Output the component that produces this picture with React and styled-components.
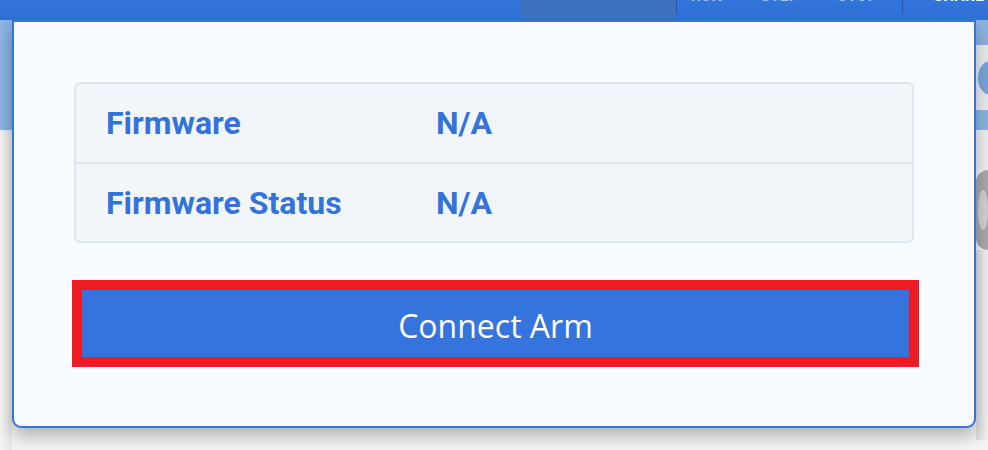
import React from 'react';
import styled, { createGlobalStyle } from 'styled-components';

const GlobalStyle = createGlobalStyle`
  html, body {
    margin: 0;
    padding: 0;
    background: #f3f4f5;
  }
  * {
    box-sizing: border-box;
  }
`;

const Page = styled.div`
  width: 988px;
  height: 450px;
  overflow: hidden;
  display: flex;
  flex-direction: column;
  background: #f4f4f4;
  font-family: Roboto, 'Liberation Sans', sans-serif;
`;

/* the app header, mostly hidden behind the top of the window */
const TopBar = styled.header`
  height: 20px;
  flex: 0 0 20px;
  display: flex;
  align-items: flex-start;
  overflow: hidden;
  background: linear-gradient(#3375dc, #2f6ed3);
  position: relative;
  z-index: 2;
`;

const BarSpacer = styled.div`
  width: 520px;
`;

const Crumb = styled.div`
  width: 156px;
  height: 19px;
  background: #3d71bf;
`;

const BarDivider = styled.div`
  width: 1px;
  height: 14px;
  background: #2557a9;
`;

const NavGroup = styled.nav`
  display: flex;
  gap: 38px;
  padding: ${(p) => p.$pad};
  margin-top: -12px;
`;

const NavItem = styled.span`
  font-size: 15px;
  line-height: 16px;
  font-weight: 700;
  letter-spacing: 0.5px;
  color: ${(p) => (p.$active ? '#ffffff' : '#a9c3ee')};
  white-space: nowrap;
`;

const Body = styled.div`
  flex: 1;
  display: flex;
  align-items: flex-start;
`;

const Gutter = styled.div`
  width: 12px;
  flex: 0 0 12px;
  display: flex;
  flex-direction: column;
`;

const Strip = styled.div`
  height: ${(p) => p.$h}px;
  background: ${(p) => p.$bg};
  border-radius: ${(p) => p.$radius || 0};
  display: flex;
  align-items: center;
  overflow: hidden;
`;

const Dot = styled.div`
  width: ${(p) => p.$w || 24}px;
  height: ${(p) => p.$dh || 34}px;
  margin-left: 2px;
  border-radius: 50%;
  background: ${(p) => p.$bg || '#7aa6dc'};
  flex: 0 0 auto;
`;

const Modal = styled.section`
  width: 964px;
  flex: 0 0 964px;
  height: 408px;
  display: flex;
  flex-direction: column;
  padding: 60px 60px 59px;
  background: #f7fafe;
  border: 2px solid #3574dc;
  border-radius: 0 0 9px 9px;
  box-shadow: 0 8px 18px rgba(0, 0, 0, 0.28);
  position: relative;
  z-index: 1;
`;

const InfoTable = styled.div`
  display: flex;
  flex-direction: column;
  background: #f2f6fb;
  border: 2px solid #dde6f0;
  border-radius: 6px;
`;

const InfoRow = styled.div`
  display: grid;
  grid-template-columns: 330px 1fr;
  align-items: center;
  height: ${(p) => p.$h}px;
  padding-left: 30px;
  border-top: ${(p) => (p.$first ? 'none' : '2px solid #dde6f0')};
`;

const InfoText = styled.span`
  font-family: Roboto, 'Liberation Sans', sans-serif;
  font-weight: 700;
  font-size: 32px;
  color: #3273dc;
  white-space: nowrap;
`;

const Highlight = styled.div`
  margin: 37px -5px 0 -2px;
  border: 10px solid #ed1c24;
`;

const ConnectButton = styled.button`
  display: block;
  width: 100%;
  height: 67px;
  border: none;
  background: #3574dc;
  color: #ffffff;
  font-family: 'Open Sans', 'Noto Sans', sans-serif;
  font-size: 32px;
  font-weight: 400;
  padding: 3px 0 0;
  cursor: pointer;
`;

const rows = [
  { label: 'Firmware', value: 'N/A', h: 78 },
  { label: 'Firmware Status', value: 'N/A', h: 79 },
];

export default function App() {
  return (
    <>
      <GlobalStyle />
      <Page>
        <TopBar>
          <BarSpacer />
          <Crumb />
          <BarDivider />
          <NavGroup $pad="0 24px 0 14px">
            <NavItem>RUN</NavItem>
            <NavItem>STEP</NavItem>
            <NavItem>STOP</NavItem>
          </NavGroup>
          <BarDivider />
          <NavGroup $pad="0 0 0 31px">
            <NavItem $active>SHARE</NavItem>
          </NavGroup>
        </TopBar>
        <Body>
          <Gutter>
            <Strip $h={110} $bg="linear-gradient(90deg, #8fb8e6, #86b0e0)" />
            <Strip $h={320} $bg="linear-gradient(90deg, #f6f6f6, #e6e6e6)" />
          </Gutter>
          <Modal>
            <InfoTable>
              {rows.map((r, i) => (
                <InfoRow key={r.label} $h={r.h} $first={i === 0}>
                  <InfoText>{r.label}</InfoText>
                  <InfoText>{r.value}</InfoText>
                </InfoRow>
              ))}
            </InfoTable>
            <Highlight>
              <ConnectButton>Connect Arm</ConnectButton>
            </Highlight>
          </Modal>
          <Gutter>
            <Strip $h={25} $bg="#8cb3e0" />
            <Strip $h={65} $bg="#e9ecef">
              <Dot />
            </Strip>
            <Strip $h={20} $bg="#8cb3e0" />
            <Strip $h={40} $bg="#eeeeee" />
            <Strip $h={80} $bg="#a9a9a9" $radius="12px 0 0 12px">
              <Dot $bg="#d0d0d0" $w={10} $dh={40} />
            </Strip>
            <Strip $h={190} $bg="linear-gradient(90deg, #dcdcdc, #f2f2f2)" />
          </Gutter>
        </Body>
      </Page>
    </>
  );
}
